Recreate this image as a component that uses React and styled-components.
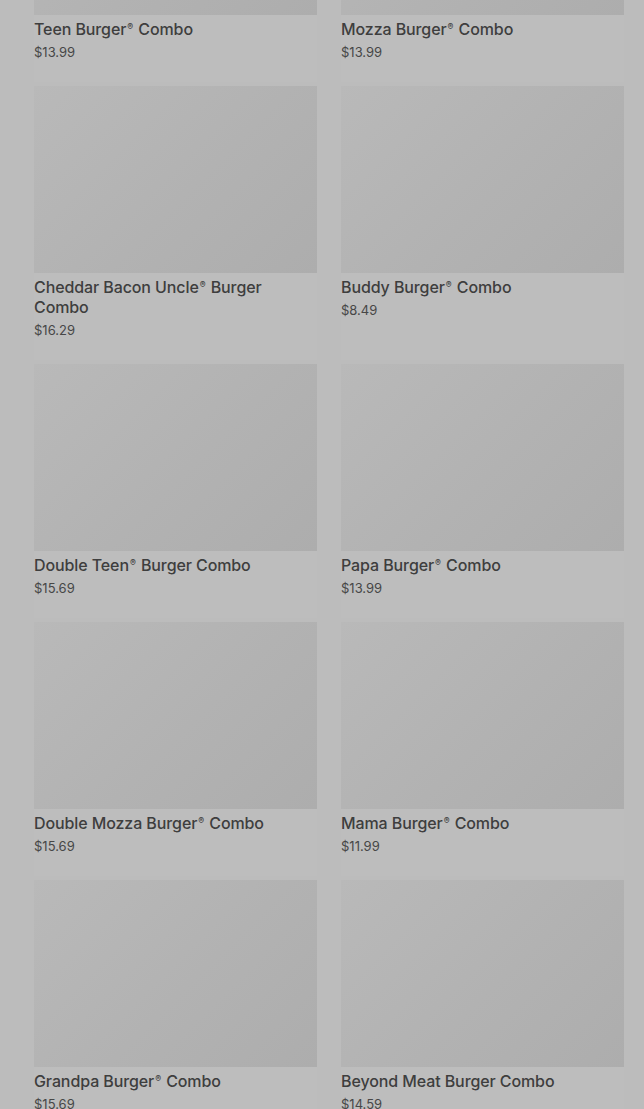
import React from "react";
import styled, { createGlobalStyle } from "styled-components";

const GlobalStyle = createGlobalStyle`
    html, body {
        margin: 0;
        padding: 0;
        background: #bcbcbc;
        overflow: hidden;
    }

    body {
        font-family: Inter, Roboto, "Liberation Sans", sans-serif;
    }
`;

const Page = styled.div`
    height: 1109px;
    overflow: hidden;
    background: #bcbcbc;
`;

const Grid = styled.div`
    margin-top: -172px;
    padding: 0 20px 0 34px;
    display: grid;
    grid-template-columns: 1fr 1fr;
    column-gap: 24px;
    row-gap: 4px;
`;

const Card = styled.div`
    display: flex;
    flex-direction: column;
    padding-bottom: 21px;
    background: #bdbdbd;
`;

const Thumb = styled.div`
    height: 187px;
    background: linear-gradient(135deg, #b9b9b9 0%, #b2b2b2 55%, #adadad 100%);
`;

const Title = styled.div`
    margin-top: 4px;
    font-size: 16px;
    line-height: 20px;
    font-weight: 500;
    letter-spacing: -0.1px;
    color: #3e3e3e;
`;

const Reg = styled.span`
    font-size: 0.55em;
    vertical-align: 0.6em;
    line-height: 0;
    margin: 0 1px;
`;

const Price = styled.div`
    margin-top: 4px;
    font-size: 13px;
    line-height: 18px;
    color: #474747;
`;

const items = [
    { title: "Teen Burger® Combo", price: "$13.99" },
    { title: "Mozza Burger® Combo", price: "$13.99" },
    { title: "Cheddar Bacon Uncle® Burger Combo", price: "$16.29" },
    { title: "Buddy Burger® Combo", price: "$8.49" },
    { title: "Double Teen® Burger Combo", price: "$15.69" },
    { title: "Papa Burger® Combo", price: "$13.99" },
    { title: "Double Mozza Burger® Combo", price: "$15.69" },
    { title: "Mama Burger® Combo", price: "$11.99" },
    { title: "Grandpa Burger® Combo", price: "$15.69" },
    { title: "Beyond Meat Burger Combo", price: "$14.59" },
];

// splits the ® out so it can sit small and raised like the original
function renderTitle(title) {
    const parts = title.split("®");
    return parts.map((part, i) => (
        <React.Fragment key={i}>
            {part}
            {i < parts.length - 1 && <Reg>®</Reg>}
        </React.Fragment>
    ));
}

function App() {
    return (
        <Page>
            <GlobalStyle />
            <Grid>
                {items.map((item) => (
                    <Card key={item.title}>
                        <Thumb />
                        <Title>{renderTitle(item.title)}</Title>
                        <Price>{item.price}</Price>
                    </Card>
                ))}
            </Grid>
        </Page>
    );
}

export default App;
